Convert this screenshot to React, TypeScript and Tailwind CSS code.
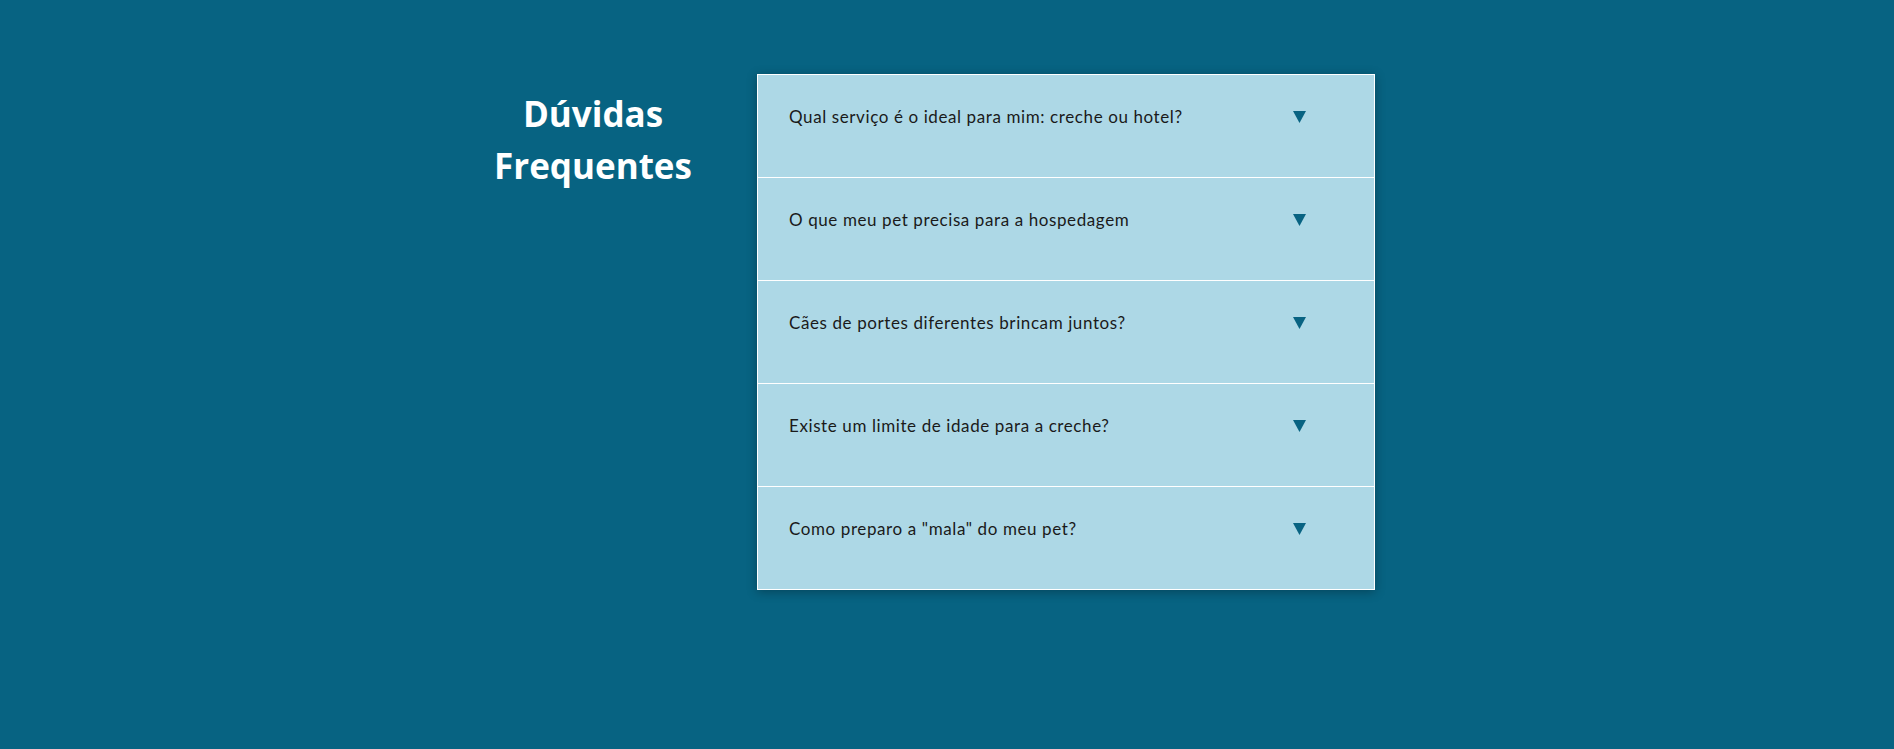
import React from 'react';

const perguntas = [
  'Qual serviço é o ideal para mim: creche ou hotel?',
  'O que meu pet precisa para a hospedagem',
  'Cães de portes diferentes brincam juntos?',
  'Existe um limite de idade para a creche?',
  'Como preparo a "mala" do meu pet?',
];

function Seta() {
  return (
    <svg width="13" height="12" viewBox="0 0 13 12" className="shrink-0">
      <polygon points="0,0 13,0 6.5,12" fill="#086382" />
    </svg>
  );
}

export default function App() {
  return (
    <div className="min-h-[749px] w-full bg-[#076382]">
      <div className="flex justify-center pt-[74px]">
        <div className="flex w-[944px] gap-[46px]">
          <h2
            className="w-[236px] shrink-0 pt-[14px] text-center text-[35px] font-bold leading-[52px] text-white"
            style={{ fontFamily: '"Open Sans", sans-serif' }}
          >
            Dúvidas
            <br />
            Frequentes
          </h2>

          <div className="w-[618px] shrink-0 self-start border border-white bg-[#add8e6] shadow-[0_2px_10px_rgba(0,0,0,0.3)]">
            {perguntas.map((p, i) => (
              <div
                key={p}
                className={`flex items-start justify-between pl-[31px] pr-[68px] pt-[30px] ${
                  i < perguntas.length - 1 ? 'h-[103px] border-b border-white' : 'h-[102px]'
                }`}
              >
                <span
                  className="text-[17px] leading-[24px] tracking-[0.6px] text-[#1a1a1a]"
                  style={{ fontFamily: 'Lato, sans-serif' }}
                >
                  {p}
                </span>
                <div className="flex h-[24px] items-center">
                  <Seta />
                </div>
              </div>
            ))}
          </div>
        </div>
      </div>
    </div>
  );
}
